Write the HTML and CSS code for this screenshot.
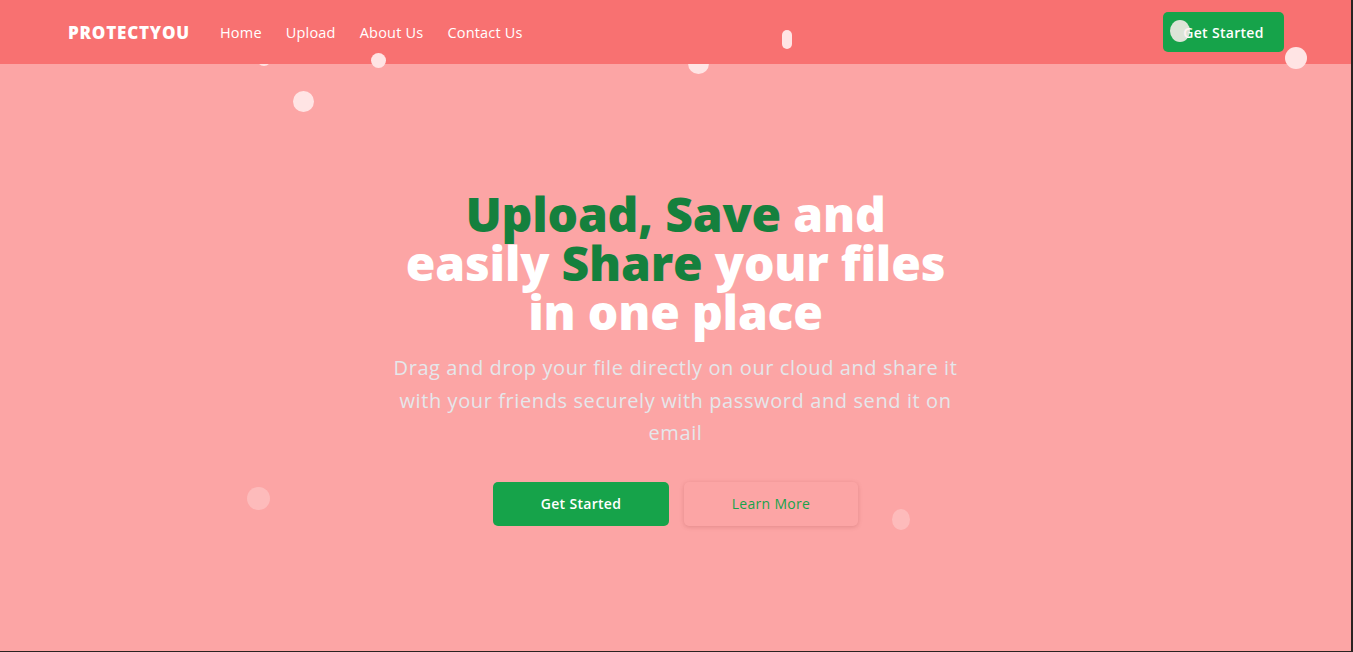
FILE: index.html
```html
<!DOCTYPE html>
<html lang="en">
<head>
<meta charset="utf-8">
<title>ProtectYou</title>
<link rel="stylesheet" href="styles.css">
</head>
<body>
<div class="page">
  <header class="navbar">
    <div class="nav-left">
      <a class="logo" href="#">PROTECTYOU</a>
      <nav class="links">
        <a href="#">Home</a>
        <a href="#">Upload</a>
        <a href="#">About Us</a>
        <a href="#">Contact Us</a>
      </nav>
    </div>
    <a class="btn btn-nav" href="#">Get Started</a>
  </header>

  <main class="hero">
    <div class="hero-inner">
      <h1 class="title"><span class="green">Upload, Save</span> and<br>easily <span class="green">Share</span> your files<br>in one place</h1>
      <p class="lead">Drag and drop your file directly on our cloud and share it with your friends securely with password and send it on email</p>
      <div class="actions">
        <a class="btn btn-primary" href="#">Get Started</a>
        <a class="btn btn-ghost" href="#">Learn More</a>
      </div>
    </div>
  </main>

  <div class="bubbles" aria-hidden="true">
    <span class="bubble under b1"></span>
    <span class="bubble b2"></span>
    <span class="bubble b3"></span>
    <span class="bubble under b4"></span>
    <span class="bubble b5"></span>
    <span class="bubble b6"></span>
    <span class="bubble b7"></span>
    <span class="bubble b8"></span>
    <span class="bubble b9"></span>
  </div>
</div>
</body>
</html>
```

FILE: styles.css
```css
* { box-sizing: border-box; }
html, body { margin: 0; padding: 0; height: 100%; background: #2b2222; }
body {
  font-family: "Open Sans", "Liberation Sans", sans-serif;
  overflow: hidden;
}
a { text-decoration: none; color: inherit; }

.page {
  position: relative;
  width: calc(100% - 2px);
  height: calc(100% - 1px);
  background: #fca5a5;
  overflow: hidden;
  display: flex;
  flex-direction: column;
}

.navbar {
  position: relative;
  z-index: 1;
  height: 64px;
  flex: none;
  background: #f87171;
  display: flex;
  align-items: center;
  justify-content: space-between;
  padding: 0 67px 0 68px;
}
.nav-left { display: flex; align-items: center; }
.logo {
  color: #fff;
  font-weight: 800;
  font-size: 17px;
  letter-spacing: 0.8px;
  margin-right: 30px;
}
.links { display: flex; gap: 24px; }
.links a { color: #fff; font-size: 14.5px; font-weight: 400; letter-spacing: 0.2px; }

.btn {
  display: inline-flex;
  align-items: center;
  justify-content: center;
  border-radius: 5px;
  font-size: 14px;
  font-weight: 600;
  letter-spacing: 0.3px;
}
.btn-nav {
  width: 121px;
  height: 40px;
  background: #16a34a;
  color: #fff;
}

.hero {
  flex: 1;
  display: flex;
  align-items: center;
  justify-content: center;
}
.hero-inner {
  width: 600px;
  display: flex;
  flex-direction: column;
  align-items: center;
  text-align: center;
}
.title {
  margin: 0;
  color: #fff;
  font-weight: 800;
  font-size: 48px;
  line-height: 49px;
  letter-spacing: -0.2px;
}
.green { color: #15803d; }
.lead {
  margin: 16px 0 0;
  width: 580px;
  color: #e5e7eb;
  font-size: 20px;
  line-height: 32.5px;
  font-weight: 400;
  letter-spacing: 0.6px;
}
.actions {
  margin-top: 32px;
  display: flex;
  gap: 15px;
}
.btn-primary {
  width: 176px;
  height: 44px;
  background: #16a34a;
  color: #fff;
}
.btn-ghost {
  width: 174px;
  height: 44px;
  background: #fca5a5;
  color: #16a34a;
  font-weight: 500;
  box-shadow: 0 1px 4px rgba(150, 60, 60, 0.25);
}

.bubbles {
  position: absolute;
  inset: 0;
  pointer-events: none;
}
.bubble {
  position: absolute;
  z-index: 2;
  background: #ffe4e4;
  border-radius: 50%;
}
.bubble.under { z-index: 0; }
.b1 { left: 257px; top: 52px; width: 14px; height: 14px; }
.b2 { left: 371px; top: 53px; width: 15px; height: 15px; }
.b3 { left: 293px; top: 91px; width: 21px; height: 21px; }
.b4 { left: 688px; top: 53px; width: 21px; height: 21px; }
.b5 { left: 782px; top: 30px; width: 10px; height: 19px; border-radius: 5px; }
.b6 { left: 1170px; top: 20px; width: 20px; height: 22px; background: rgba(255, 240, 240, 0.85); }
.b7 { left: 1285px; top: 47px; width: 22px; height: 22px; }
.b8 { left: 247px; top: 487px; width: 23px; height: 23px; background: rgba(255, 228, 228, 0.35); }
.b9 { left: 892px; top: 509px; width: 18px; height: 21px; background: rgba(255, 228, 228, 0.35); }
```
